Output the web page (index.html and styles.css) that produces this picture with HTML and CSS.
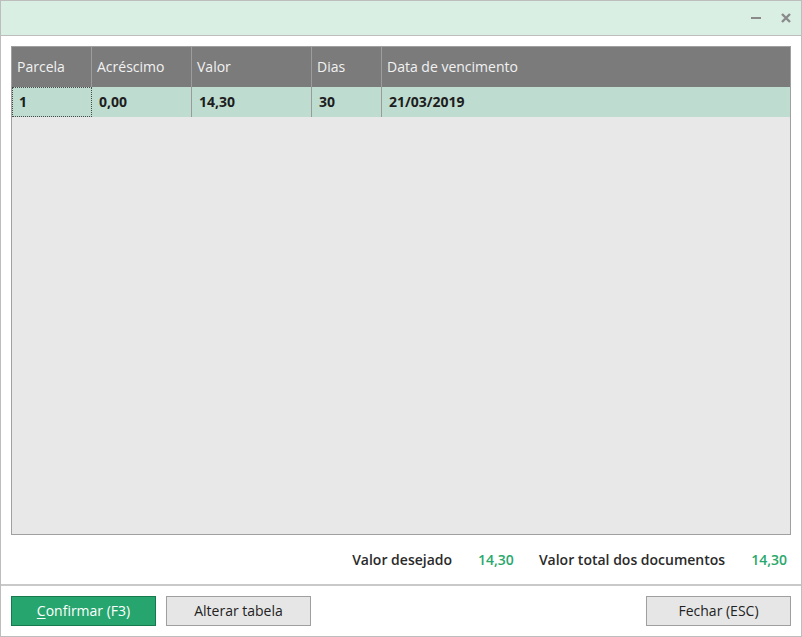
FILE: index.html
```html
<!DOCTYPE html>
<html lang="pt">
<head>
<meta charset="utf-8">
<link rel="stylesheet" href="styles.css">
</head>
<body>
<div class="window">
  <div class="titlebar">
    <svg class="ico" width="12" height="12" viewBox="0 0 12 12"><rect x="1" y="5" width="10" height="2" fill="#8a8a8a"/></svg>
    <svg class="ico" width="12" height="12" viewBox="0 0 12 12"><path d="M2 2 L10 10 M10 2 L2 10" stroke="#8a8a8a" stroke-width="2.4"/></svg>
  </div>
  <div class="content">
    <div class="grid">
      <div class="row head">
        <div class="cell">Parcela</div>
        <div class="cell">Acréscimo</div>
        <div class="cell">Valor</div>
        <div class="cell">Dias</div>
        <div class="cell">Data de vencimento</div>
      </div>
      <div class="row data">
        <div class="cell focus">1</div>
        <div class="cell">0,00</div>
        <div class="cell">14,30</div>
        <div class="cell">30</div>
        <div class="cell">21/03/2019</div>
      </div>
    </div>
    <div class="totals">
      <span class="label">Valor desejado</span>
      <span class="value">14,30</span>
      <span class="label">Valor total dos documentos</span>
      <span class="value">14,30</span>
    </div>
  </div>
  <div class="footer">
    <button class="btn primary"><u>C</u>onfirmar (F3)</button>
    <button class="btn">Alterar tabela</button>
    <span class="spacer"></span>
    <button class="btn">Fechar (ESC)</button>
  </div>
</div>
</body>
</html>
```
FILE: styles.css
```css
* { box-sizing: border-box; }
html, body { margin: 0; padding: 0; background: #ffffff; }
body { font-family: "Open Sans", "Noto Sans", sans-serif; font-size: 14px; color: #222; }

.window {
  width: 802px;
  height: 637px;
  border: 1px solid #bdbdbd;
  display: flex;
  flex-direction: column;
  background: #fff;
}

.titlebar {
  height: 35px;
  flex: none;
  background: #d9efe4;
  border-bottom: 1px solid #bdbdbd;
  display: flex;
  align-items: center;
  justify-content: flex-end;
  gap: 18px;
  padding: 0 9px 0 0;
}
.ico { display: block; }

.content {
  padding: 10px 10px 0 10px;
  display: flex;
  flex-direction: column;
  flex: none;
}

.grid {
  height: 489px;
  border: 1px solid #a0a0a0;
  background: #e8e8e8;
}

.row {
  display: grid;
  grid-template-columns: 80px 100px 120px 70px 1fr;
}
.cell {
  border-right: 1px solid #a3a3a3;
  padding-left: 5px;
  padding-bottom: 2px;
  display: flex;
  align-items: center;
  white-space: nowrap;
}
.cell:last-child { border-right: none; }

.head { height: 40px; background: #7b7b7b; color: #f2f2f2; }
.head .cell { border-right-color: #9d9d9d; }

.data { height: 30px; background: #bedcd0; font-weight: 700; color: #1d1d1d; }
.data .cell { padding-left: 7px; border-right-color: #9a9a9a; }
.data .focus { border: 1px dotted #4a4a4a; padding-left: 6px; }

.totals {
  height: 49px;
  display: flex;
  align-items: center;
  justify-content: flex-end;
  padding-right: 4px;
  font-weight: 600;
  color: #2a2a2a;
}
.totals .label { margin-right: 26px; }
.totals .value { color: #2aa86b; margin-right: 25px; }
.totals .value:last-child { margin-right: 0; }

.footer {
  border-top: 2px solid #c9c9c9;
  height: 51px;
  flex: none;
  display: flex;
  align-items: flex-start;
  padding: 10px 10px 0 10px;
  gap: 10px;
}
.spacer { flex: 1; }

.btn {
  width: 145px;
  height: 30px;
  font-family: "Open Sans", "Noto Sans", sans-serif;
  font-size: 14px;
  color: #222;
  background: #e6e6e6;
  border: 1px solid #9f9f9f;
  padding: 0 0 2px 0;
  margin: 0;
}
.btn.primary {
  background: #26a66e;
  border-color: #177a4d;
  color: #fff;
}
.btn u { text-decoration-thickness: 1px; text-underline-offset: 2px; }
```
